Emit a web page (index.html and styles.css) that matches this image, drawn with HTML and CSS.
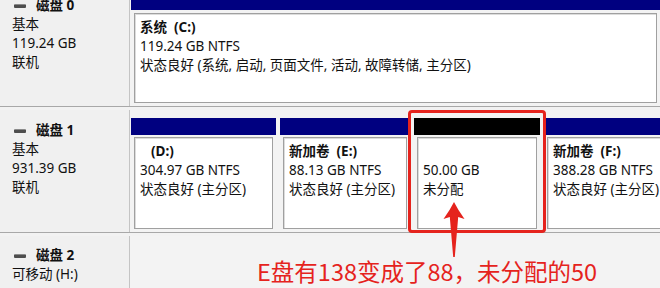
FILE: index.html
```html
<!DOCTYPE html>
<html lang="zh-CN">
<head>
<meta charset="utf-8">
<title>磁盘管理</title>
<link rel="stylesheet" href="styles.css">
</head>
<body>
<div class="page">
  <div class="disk disk0">
    <div class="label">
      <div class="name"><span class="icon"></span>磁盘 0</div>
      <div>基本</div>
      <div>119.24 GB</div>
      <div>联机</div>
    </div>
    <div class="parts">
      <div class="cell grow">
        <div class="bar"></div>
        <div class="box">
          <div class="bold">系统&nbsp;&nbsp;(C:)</div>
          <div>119.24 GB NTFS</div>
          <div>状态良好 (系统, 启动, 页面文件, 活动, 故障转储, 主分区)</div>
        </div>
      </div>
    </div>
  </div>

  <div class="disk disk1">
    <div class="label">
      <div class="name"><span class="icon"></span>磁盘 1</div>
      <div>基本</div>
      <div>931.39 GB</div>
      <div>联机</div>
    </div>
    <div class="parts">
      <div class="cell w-d">
        <div class="bar"></div>
        <div class="box">
          <div class="bold indent">(D:)</div>
          <div>304.97 GB NTFS</div>
          <div>状态良好 (主分区)</div>
        </div>
      </div>
      <div class="cell w-e">
        <div class="bar"></div>
        <div class="box">
          <div class="bold">新加卷&nbsp;&nbsp;(E:)</div>
          <div>88.13 GB NTFS</div>
          <div>状态良好 (主分区)</div>
        </div>
      </div>
      <div class="cell w-u">
        <div class="bar black"></div>
        <div class="box">
          <div>&nbsp;</div>
          <div>50.00 GB</div>
          <div>未分配</div>
        </div>
      </div>
      <div class="cell grow">
        <div class="bar"></div>
        <div class="box">
          <div class="bold">新加卷&nbsp;&nbsp;(F:)</div>
          <div>388.28 GB NTFS</div>
          <div>状态良好 (主分区)</div>
        </div>
      </div>
    </div>
  </div>

  <div class="disk disk2">
    <div class="label">
      <div class="name"><span class="icon"></span>磁盘 2</div>
      <div>可移动 (H:)</div>
    </div>
    <div class="parts"></div>
  </div>

  <div class="highlight"></div>
  <svg class="arrow" width="28" height="60" viewBox="0 0 28 60">
    <path d="M14 2 Q18 10 24.5 19 L18.2 17 L14.8 57 L13.2 57 L9.8 17 L3.5 19 Q10 10 14 2 Z" fill="#e5231d"/>
  </svg>
  <div class="note">E盘有138变成了88，未分配的50</div>
</div>
</body>
</html>
```

FILE: styles.css
```css
html, body {
  margin: 0;
  padding: 0;
}
body {
  width: 660px;
  height: 288px;
  overflow: hidden;
  background: #f2f2f2;
  font-family: "Noto Sans", "Noto Sans CJK SC", sans-serif;
  font-size: 13.5px;
  line-height: 19px;
  color: #111;
}
.page {
  position: relative;
  display: flow-root;
  height: 288px;
}
.disk {
  display: flex;
  border-bottom: 1px solid #a8a8a8;
  margin-bottom: 3px;
}
.disk0 {
  margin-top: -15px;
  height: 121px;
}
.disk1 {
  height: 122px;
}
.disk2 {
  height: 60px;
  border-bottom: none;
}
.label {
  width: 130px;
  flex: none;
  box-sizing: border-box;
  background: #f0f0f0;
  border-right: 1px solid #c4c4c4;
  padding: 11px 0 0 12px;
}
.disk2 .label {
  padding-top: 10px;
}
.name {
  font-weight: bold;
  display: flex;
  align-items: center;
}
.icon {
  width: 12px;
  height: 4px;
  margin: 0 10px 0 2px;
  background: linear-gradient(#8a8a8a 0 1px, #4e4e4e 1px);
  border-radius: 1px;
}
.parts {
  flex: 1;
  display: flex;
  gap: 4px;
  padding: 8px 0 1px 1px;
  background: #f3f3f3;
}
.cell {
  display: flex;
  flex-direction: column;
  flex: none;
}
.grow {
  flex: 1;
}
.w-d { width: 145px; }
.w-e { width: 130px; }
.w-u { width: 126px; }
.bar {
  height: 17px;
  background: #000080;
  flex: none;
}
.bar.black {
  background: #000;
}
.box {
  flex: 1;
  margin: 2px 3px 2px 3px;
  background: #fff;
  border: 1px solid #a0a0a0;
  box-shadow: inset 1px 1px 0 #dcdcdc;
  padding: 4px 5px 0 5px;
  white-space: nowrap;
  overflow: hidden;
}
.disk0 .box {
  margin-top: 3px;
}
.bold {
  font-weight: bold;
}
.indent {
  padding-left: 11px;
}
.highlight {
  position: absolute;
  left: 408px;
  top: 110px;
  width: 138px;
  height: 123px;
  box-sizing: border-box;
  border: 3px solid #e5231d;
  border-radius: 4px;
}
.arrow {
  position: absolute;
  left: 440px;
  top: 200px;
}
.note {
  position: absolute;
  left: 257px;
  top: 260px;
  font-family: "Noto Sans CJK SC", sans-serif;
  font-size: 23.5px;
  line-height: 1;
  color: #e5231d;
  white-space: nowrap;
}
```
